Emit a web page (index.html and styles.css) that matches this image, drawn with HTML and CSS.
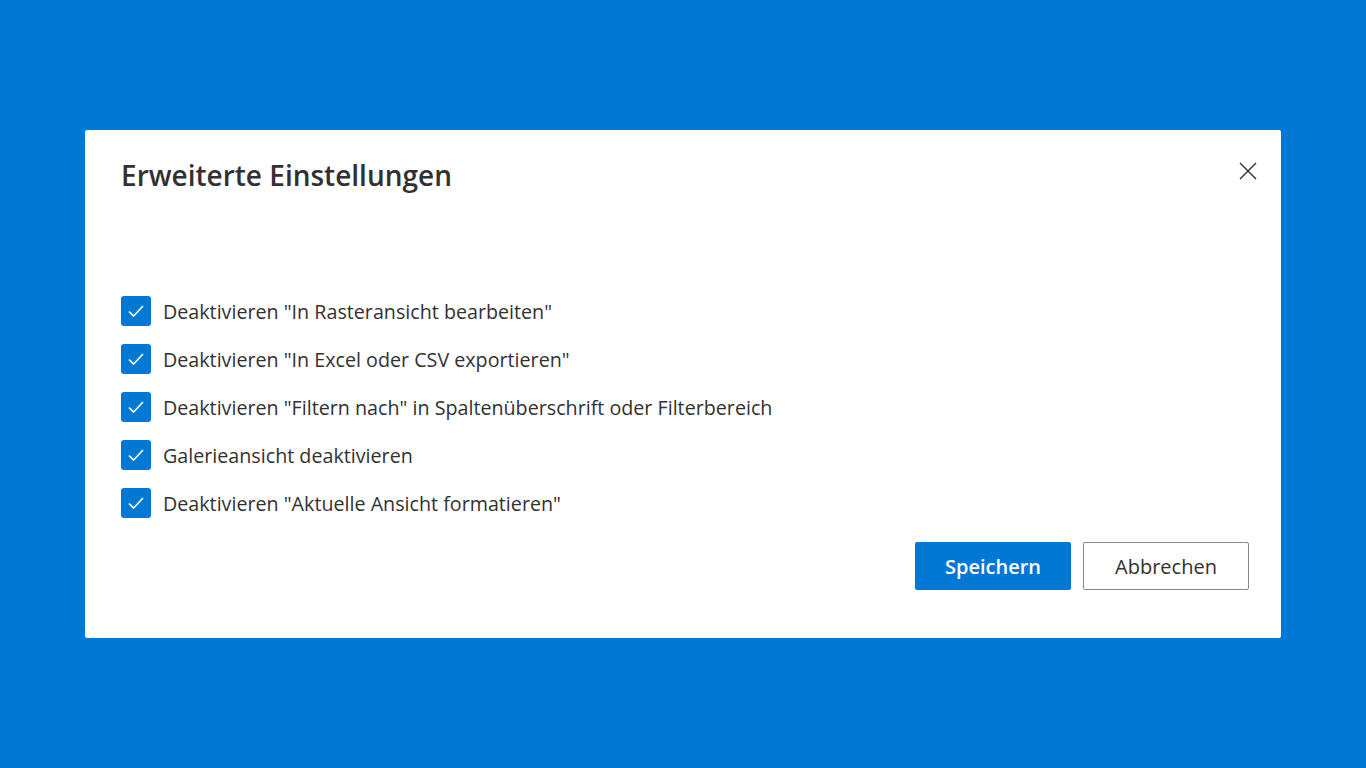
FILE: index.html
```html
<!DOCTYPE html>
<html lang="de">
<head>
  <meta charset="UTF-8">
  <meta name="viewport" content="width=device-width, initial-scale=1.0">
  <title>Erweiterte Einstellungen</title>
  <link rel="stylesheet" href="styles.css">
</head>
<body>
  <div class="dialog">
    <div class="dialog-header">
      <h2>Erweiterte Einstellungen</h2>
      <button class="close" aria-label="Schließen">
        <svg width="18" height="18" viewBox="0 0 18 18">
          <path d="M1 1 L17 17 M17 1 L1 17" stroke="#323130" stroke-width="1.4" fill="none"/>
        </svg>
      </button>
    </div>

    <div class="options">
      <label class="option">
        <span class="check"><svg width="18" height="14" viewBox="0 0 18 14"><path d="M2 7.5 L6.5 12 L16 2" stroke="#fff" stroke-width="1.6" fill="none"/></svg></span>
        <span class="text">Deaktivieren "In Rasteransicht bearbeiten"</span>
      </label>
      <label class="option">
        <span class="check"><svg width="18" height="14" viewBox="0 0 18 14"><path d="M2 7.5 L6.5 12 L16 2" stroke="#fff" stroke-width="1.6" fill="none"/></svg></span>
        <span class="text">Deaktivieren "In Excel oder CSV exportieren"</span>
      </label>
      <label class="option">
        <span class="check"><svg width="18" height="14" viewBox="0 0 18 14"><path d="M2 7.5 L6.5 12 L16 2" stroke="#fff" stroke-width="1.6" fill="none"/></svg></span>
        <span class="text">Deaktivieren "Filtern nach" in Spaltenüberschrift oder Filterbereich</span>
      </label>
      <label class="option">
        <span class="check"><svg width="18" height="14" viewBox="0 0 18 14"><path d="M2 7.5 L6.5 12 L16 2" stroke="#fff" stroke-width="1.6" fill="none"/></svg></span>
        <span class="text">Galerieansicht deaktivieren</span>
      </label>
      <label class="option">
        <span class="check"><svg width="18" height="14" viewBox="0 0 18 14"><path d="M2 7.5 L6.5 12 L16 2" stroke="#fff" stroke-width="1.6" fill="none"/></svg></span>
        <span class="text">Deaktivieren "Aktuelle Ansicht formatieren"</span>
      </label>
    </div>

    <div class="actions">
      <button class="btn primary">Speichern</button>
      <button class="btn secondary">Abbrechen</button>
    </div>
  </div>
</body>
</html>
```

FILE: styles.css
```css
body {
  margin: 0;
  height: 100vh;
  background-color: #0078d4;
  font-family: "Open Sans", "Noto Sans", sans-serif;
  color: #323130;
  display: flex;
  align-items: center;
  justify-content: center;
}
.dialog {
  background: white;
  width: 1196px;
  height: 508px;
  box-sizing: border-box;
  padding: 0 32px 48px 36px;
  display: flex;
  flex-direction: column;
  border-radius: 2px;
}
.dialog-header {
  display: flex;
  justify-content: space-between;
  align-items: flex-start;
  height: 166px;
}
.dialog-header h2 {
  margin: 26px 0 0;
  font-size: 28px;
  font-weight: 600;
  line-height: 38px;
}
.close {
  margin: 32px -8px 0 0;
  padding: 0;
  border: none;
  background: none;
  width: 18px;
  height: 18px;
}
.options {
  display: flex;
  flex-direction: column;
  gap: 18px;
}
.option {
  display: flex;
  align-items: center;
  gap: 12px;
  font-size: 19.7px;
  line-height: 30px;
}
.option .text {
  position: relative;
  top: 1px;
}
.check {
  width: 30px;
  height: 30px;
  border-radius: 3px;
  background-color: #0078d4;
  display: flex;
  align-items: center;
  justify-content: center;
  flex-shrink: 0;
}
.actions {
  margin-top: auto;
  display: flex;
  justify-content: flex-end;
  gap: 12px;
}
.btn {
  height: 48px;
  padding: 0;
  font-family: inherit;
  font-size: 20px;
  font-weight: 600;
  color: #323130;
  background: white;
  border: 1px solid #8a8886;
  border-radius: 2px;
}
.btn.primary {
  width: 156px;
  background-color: #0078d4;
  border-color: #0078d4;
  color: white;
}
.btn.secondary {
  width: 166px;
  font-weight: 500;
}
```
